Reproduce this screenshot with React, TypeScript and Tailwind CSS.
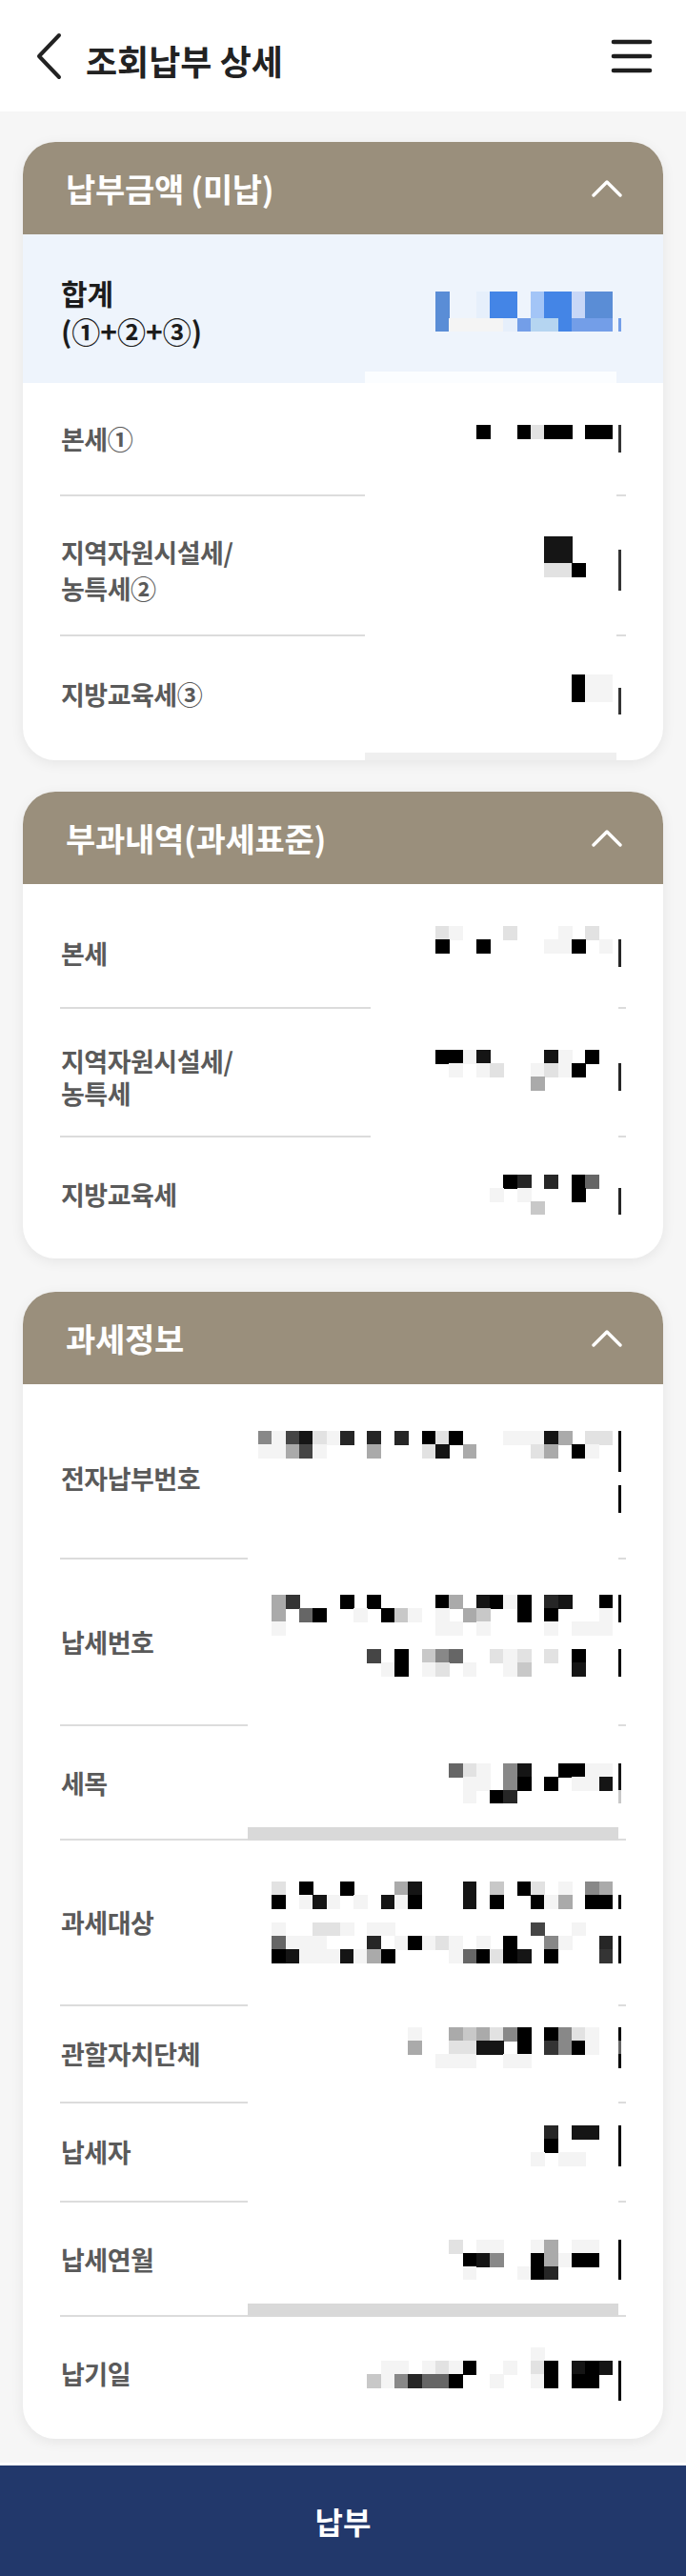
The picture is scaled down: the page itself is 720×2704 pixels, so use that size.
import React from "react";

// grey levels used by the redacted (pixelated) values
const PAL: Record<string, string> = {
  "0": "#000000",
  "1": "#151515",
  "2": "#262626",
  "3": "#343434",
  "4": "#454545",
  "5": "#666666",
  "6": "#888888",
  "7": "#aaaaaa",
  "8": "#c8c8c8",
  "9": "#e2e2e2",
  w: "#f4f4f4",
  b: "#4485e6",
  c: "#5a8dd6",
  d: "#a3c5f7",
  e: "#c8d7f7",
  f: "#e6effb",
  g: "#b5d5f1",
  h: "#739ee8",
};

const CW = 14.3;
const RH = 14.2;
const COLS = 26;

// each row: grid cells (right aligned) + "|" + sliver colour at the right edge
function Mosaic({ rows }: { rows: string[] }) {
  const width = COLS * CW + 11;
  return (
    <svg width={width} height={rows.length * RH} className="block shrink-0" shapeRendering="crispEdges">
      {rows.map((r, y) => {
        const [g, s = "."] = r.split("|");
        const grid = g.padStart(COLS, ".").slice(-COLS);
        return (
          <g key={y}>
            {grid.split("").map((ch, x) =>
              ch === "." ? null : (
                <rect key={x} x={x * CW} y={y * RH} width={CW + 0.6} height={RH + 0.6} fill={PAL[ch]} />
              )
            )}
            {s !== "." && <rect x={COLS * CW + 6} y={y * RH} width={3} height={RH + 0.6} fill={PAL[s]} />}
          </g>
        );
      })}
    </svg>
  );
}

function ChevronUp() {
  return (
    <svg width="32" height="18" viewBox="0 0 32 18" fill="none">
      <polyline points="2,16 16,2 30,16" stroke="#ffffff" strokeWidth="3.4" strokeLinecap="round" strokeLinejoin="round" />
    </svg>
  );
}

function CardHeader({ title }: { title: string }) {
  return (
    <div className="h-[97px] bg-[#9a8f7c] flex items-center justify-between pl-[45px] pr-[43px]">
      <h2 className="text-[34px] font-bold text-white leading-none tracking-[-0.3px]">{title}</h2>
      <ChevronUp />
    </div>
  );
}

type Kind = "c1" | "c2" | "c3" | "band";

function Divider({ kind }: { kind: Kind }) {
  if (kind === "band") {
    return (
      <div className="flex items-end mx-[39px] h-[14px]">
        <div className="h-[2px] w-[197px] bg-[#dcdcdc]" />
        <div className="h-[14px] w-[389px] bg-[#d9d9d9]" />
        <div className="h-[2px] w-[8px] bg-[#dcdcdc]" />
      </div>
    );
  }
  const left = kind === "c1" ? "w-[320px]" : kind === "c2" ? "w-[326px]" : "w-[197px]";
  const gap = kind === "c1" ? "w-[264px]" : kind === "c2" ? "w-[260px]" : "w-[389px]";
  const right = kind === "c1" ? "w-[10px]" : "w-[8px]";
  return (
    <div className="flex mx-[39px] h-[2px]">
      <div className={`h-[2px] bg-[#dcdcdc] ${left}`} />
      <div className={`h-[2px] bg-white ${gap}`} />
      <div className={`h-[2px] bg-[#dcdcdc] ${right}`} />
    </div>
  );
}

function Row({
  label,
  rows,
  box,
  divider,
  leading = "leading-[34px]",
}: {
  label: React.ReactNode;
  rows: string[];
  box: string;
  divider?: Kind;
  leading?: string;
}) {
  return (
    <div>
      <div className={`flex items-center justify-between pl-[40px] pr-[42px] ${box}`}>
        <div className={`text-[27px] font-bold text-[#5a5a5a] tracking-[-0.5px] ${leading}`}>{label}</div>
        <Mosaic rows={rows} />
      </div>
      {divider && <Divider kind={divider} />}
    </div>
  );
}

function Card({ title, children, className }: { title: string; children: React.ReactNode; className: string }) {
  return (
    <section className={`mx-[24px] rounded-[34px] bg-white overflow-hidden shadow-[0_3px_14px_rgba(0,0,0,0.07)] ${className}`}>
      <CardHeader title={title} />
      {children}
    </section>
  );
}

export default function App() {
  return (
    <div className="w-[720px] bg-[#f6f6f6] font-['Noto_Sans_CJK_KR','Noto_Sans',sans-serif]">
      {/* Top bar */}
      <header className="h-[117px] bg-white flex items-center justify-between pl-[37px] pr-[35px]">
        <div className="flex items-center gap-[25px]">
          <svg width="28" height="50" viewBox="0 0 28 50" fill="none">
            <polyline points="25,3 4,25 25,47" stroke="#222222" strokeWidth="4" strokeLinecap="round" strokeLinejoin="round" />
          </svg>
          <h1 className="text-[36px] font-bold text-[#222222] leading-none pt-[8px]">조회납부 상세</h1>
        </div>
        <svg width="44" height="36" viewBox="0 0 44 36" fill="none">
          <line x1="3" y1="3" x2="41" y2="3" stroke="#1e1e1e" strokeWidth="4.6" strokeLinecap="round" />
          <line x1="3" y1="18" x2="41" y2="18" stroke="#1e1e1e" strokeWidth="4.6" strokeLinecap="round" />
          <line x1="3" y1="33" x2="41" y2="33" stroke="#1e1e1e" strokeWidth="4.6" strokeLinecap="round" />
        </svg>
      </header>

      {/* 납부금액 */}
      <Card title="납부금액 (미납)" className="mt-[32px]">
        <div className="bg-[#eef4fc]">
          <div className="h-[144px] pt-[18px] flex items-center justify-between pl-[40px] pr-[42px]">
            <div className="text-[30px] font-bold text-[#1c1c1c] leading-[40px]">
              합계
              <br />
              (①+②+③)
            </div>
            <Mosaic rows={["c..fbb.dbbecc|.", "c..fbb.dbbecc|.", "cwwwwfhggbhhh|h"]} />
          </div>
          <div className="h-[12px] flex">
            <div className="ml-[359px] w-[264px] h-[12px] bg-[#fbfdff]" />
          </div>
        </div>
        <Row label="본세①" box="h-[117px]" divider="c1" rows={["...0..0900.00|3", "|3"]} />
        <Row
          label={
            <>
              지역자원시설세/
              <br />
              농특세②
            </>
          }
          leading="leading-[38px]"
          box="h-[145px] pt-[10px]"
          divider="c1"
          rows={["........11...|.", "........11...|3", "........990..|3", "|3", "|."]}
        />
        <Row label="지방교육세③" box="h-[122px]" rows={["..........0ww|.", "..........0ww|3", "|3"]} />
        <div className="h-[8px] flex">
          <div className="ml-[359px] w-[264px] h-[8px] bg-[#efefef]" />
        </div>
      </Card>

      {/* 부과내역 */}
      <Card title="부과내역(과세표준)" className="mt-[33px]">
        <div className="pt-[16px]">
          <Row label="본세" box="h-[113px]" divider="c2" rows={["9w...9...w.9.|.", "0..0....ww0.w|2", "|2", "|."]} />
          <Row
            label={
              <>
                지역자원시설세/
                <br />
                농특세
              </>
            }
            box="h-[133px] pt-[10px]"
            divider="c2"
            rows={["00w1....1w.0.|.", ".w.w9..w9w0..|2", ".......7.....|2", "|."]}
          />
          <Row label="지방교육세" box="h-[120px]" rows={[".....02.2.05.|.", "....w.w...0..|2", ".......8.....|2"]} />
          <div className="h-[7px]" />
        </div>
      </Card>

      {/* 과세정보 */}
      <Card title="과세정보" className="mt-[35px]">
        <div className="pt-[16px]">
          <Row
            label="전자납부번호"
            box="h-[166px]"
            divider="c3"
            rows={[
              "6w419w2.2.2.090...www17.99|0",
              "ww74w...7...91.7....97.0w.|0",
              "|0",
              "|.",
              "|0",
              "|0",
              "|.",
            ]}
          />
          <Row
            label="납세번호"
            box="h-[173px]"
            divider="c3"
            rows={[
              ".73...0.0....07.10w0.21..0|0",
              ".7.50..w.08w.w.78..0.0...w|0",
              ".w...........ww.w....w.www|.",
              "|.",
              "........4.0.865..9w9.9.0..|0",
              ".........w0.w9.w..w8...1..|0",
              "|.",
            ]}
          />
          <Row
            label="세목"
            box="h-[106px] pt-[14px]"
            divider="band"
            rows={["59w.61..00ww|1", ".ww.60.0.ww1|1", ".w.02.......|8"]}
          />
          <Row
            label="과세대상"
            box="h-[172px]"
            divider="c3"
            rows={[
              ".9.0..0...71...1.8.09.w.67|.",
              ".0.w1w.w.1w0...1.0..0w7.00|0",
              "|.",
              ".w..99w.ww..........4..w..|.",
              ".5www...2.w0w9w.w.0..6w..2|0",
              ".01www1w70....w50901.0...3|0",
            ]}
          />
          <Row
            label="관할자치단체"
            box="h-[100px]"
            divider="c3"
            rows={["...........w..787960.069w.|0", "...........7..9911.0.360w.|5", ".............www..ww......|0", "|."]}
          />
          <Row label="납세자" box="h-[102px]" divider="c3" rows={["2.11.|0", "0....|0", "w.ww..|0", "|."]} />
          <Row
            label="납세연월"
            box="h-[106px] pt-[14px]"
            divider="band"
            rows={["9.ww..w7.ww.|0", ".016..07w00.|0", ".w...w02....|0"]}
          />
          <Row
            label="납기일"
            box="h-[120px]"
            rows={["w.....|.", ".........ww.w9w0..w.90.101|0", "........8w62550..w..w0.00.|0", "|0"]}
          />
          <div className="h-[8px]" />
        </div>
      </Card>

      {/* Pay button */}
      <div className="mt-[25px] border-t-[3px] border-white">
        <button className="w-full h-[116px] bg-[#22386b] flex items-center justify-center">
          <span className="text-[32px] font-bold text-white leading-none">납부</span>
        </button>
      </div>
    </div>
  );
}
